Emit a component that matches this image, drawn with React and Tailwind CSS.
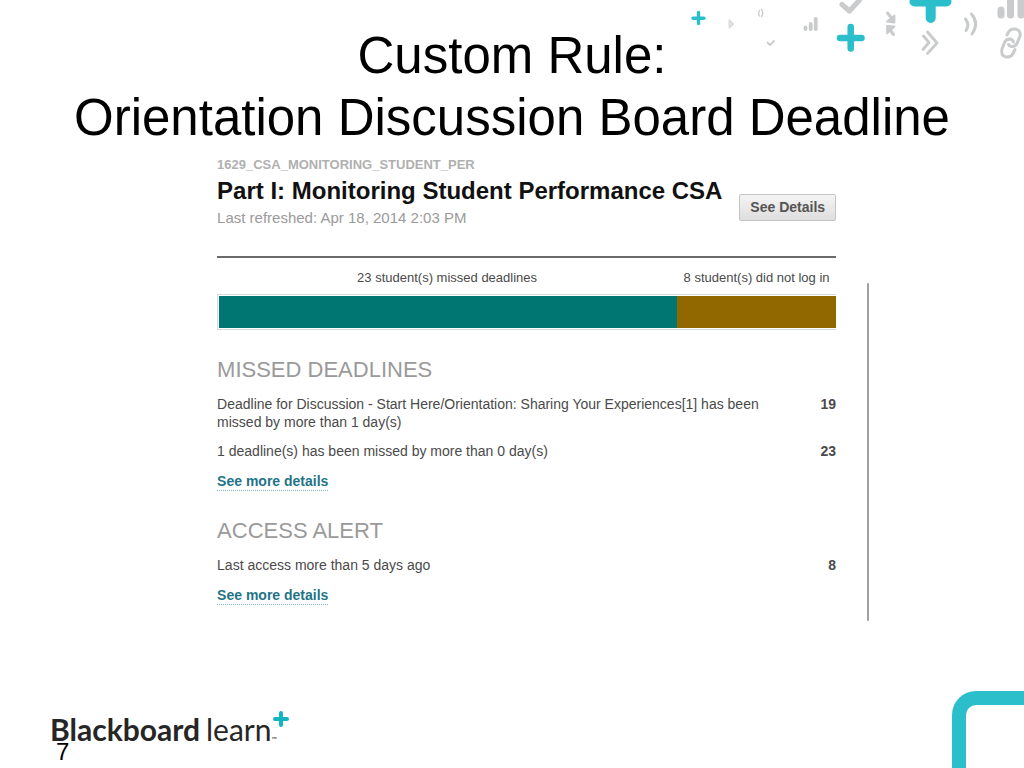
const sections = [
  {
    title: "MISSED DEADLINES",
    rows: [
      {
        text: "Deadline for Discussion - Start Here/Orientation: Sharing Your Experiences[1] has been missed by more than 1 day(s)",
        count: 19,
      },
      { text: "1 deadline(s) has been missed by more than 0 day(s)", count: 23 },
    ],
  },
  {
    title: "ACCESS ALERT",
    rows: [{ text: "Last access more than 5 days ago", count: 8 }],
  },
];

function Decoration() {
  return (
    <svg
      aria-hidden="true"
      className="pointer-events-none absolute top-0 right-0 h-16 w-[344px]"
      viewBox="680 0 344 64"
      fill="none"
      strokeLinecap="round"
      strokeLinejoin="round"
    >
      <g stroke="#2bbfcb">
        <path d="M698.500 12.500v11M693 18.300h11" strokeWidth="3.400" />
        <path d="M850.700 27v21.500M840 38h21.500" strokeWidth="6.500" />
        <path d="M930.700 -14v32M914.500 1.500h32" strokeWidth="10" />
      </g>
      <g stroke="#c9cbcc">
        <path d="M729.500 20.500v7M730 21l3 3-3 3" stroke="#dadcdc" strokeWidth="2" />
        <path d="M759.500 10.500q-1.500 3 0 5.500M761.500 9.500q2.500 3.500 0 7" strokeWidth="1.300" />
        <path d="M767.500 42.500l2.500 2.500 4-4" strokeWidth="1.800" />
        <path d="M805.500 27.500v1.500M810.700 24v5M815.700 19v10" strokeWidth="3.800" />
        <path d="M842 4.500l7.500 6.500 10-11" strokeWidth="5" />
        <path d="M887.500 13l4 5" strokeWidth="3" />
        <path d="M894.500 15.500v7l-7.500-1z" fill="#c9cbcc" strokeWidth="1.800" />
        <path d="M893.500 34.500l-3-4" strokeWidth="3" />
        <path d="M887 33.500v-7.500l7.500 .500z" fill="#c9cbcc" strokeWidth="1.800" />
        <path d="M923.500 36l5.500 6.500-6 7" strokeWidth="2.800" />
        <path d="M927.500 32l9.500 11-9.500 10.500" strokeWidth="2.800" />
        <path d="M965.500 19q4.500 5.500 .500 11.500M971.500 14q8 9.500 .500 20" strokeWidth="3" />
        <path d="M1001 10v5M1010.500 1.500v13.500M1021 -6v21" strokeWidth="7" />
        <g strokeWidth="3">
          <path d="M1007 35l1.500-3q2.500-3.500 6.500-3 6 1 5 7l-3 7.500q-2 3.500-5.500 3-2.500-.500-3-2" />
          <path d="M1013.500 42q-.500-2.500-3.500-3-4 0-5.500 3.500l-2.500 6.500q-1.500 7 4 8 5 .500 7-3.500l2-4" />
        </g>
      </g>
    </svg>
  );
}

function CornerFrame() {
  return (
    <div
      aria-hidden="true"
      className="h-[77px] w-[72px] rounded-tl-[24px] border-t-[14px] border-l-[14px] border-[#2bbfcb]"
    />
  );
}

function Logo() {
  return (
    <div className="flex items-start text-[30px] leading-8 text-[#262626] font-[Lato,sans-serif]">
      <span className="font-bold">Blackboard</span>
      <span className="ml-1.5">learn</span>
      <span className="relative w-5 self-stretch">
        <svg
          aria-hidden="true"
          className="absolute -top-0.5 left-0.5 size-4"
          viewBox="0 0 16 16"
          stroke="#12b5bf"
          strokeWidth="4"
          strokeLinecap="round"
        >
          <path d="M8 2v12M2 8h12" />
        </svg>
        <span className="absolute bottom-0.5 left-0 text-[7px] leading-none">™</span>
      </span>
    </div>
  );
}

function Section({ title, rows }) {
  return (
    <section className="mt-[26px]">
      <h3 className="text-[22px] leading-7 text-[#9a9a9a]">{title}</h3>
      <ul className="mt-[11px] flex flex-col gap-[11px]">
        {rows.map((row) => (
          <li key={row.text} className="flex justify-between gap-12 leading-[18px]">
            <span>{row.text}</span>
            <span className="font-bold">{row.count}</span>
          </li>
        ))}
      </ul>
      <a
        href="#details"
        className="mt-3 block w-fit border-b border-dotted border-[#7fb4c0] font-bold leading-[18px] text-[#1f7488]"
      >
        See more details
      </a>
    </section>
  );
}

export default function App() {
  return (
    <div className="relative flex min-h-screen flex-col overflow-hidden bg-white font-['Liberation_Sans',Arial,sans-serif] text-black">
      <Decoration />
      <h1 className="px-8 pt-[25px] text-center text-[51px] leading-[62px]">
        Custom Rule:
        <br />
        Orientation Discussion Board Deadline
      </h1>

      <main className="ml-[21.2%] flex max-w-[652px] items-end gap-[31px] pt-2">
        <article className="flex-1 pb-4 text-[14px] text-[#4a4a4a]">
          <header className="flex items-end justify-between border-b-2 border-[#6b6b6b] pb-7">
            <div>
              <p className="text-[13px] leading-4 font-bold text-[#b0b0b0]">
                1629_CSA_MONITORING_STUDENT_PER
              </p>
              <h2 className="pt-0.5 text-[24px] leading-8 font-bold text-[#111111]">
                Part I: Monitoring Student Performance CSA
              </h2>
              <p className="text-[15px] leading-[21px] text-[#9a9a9a]">
                Last refreshed: Apr 18, 2014 2:03 PM
              </p>
            </div>
            <button
              type="button"
              className="mb-[7px] h-[27px] shrink-0 rounded-xs border border-[#c4c4c4] bg-linear-to-b from-[#f4f4f4] to-[#dedede] px-2.5 font-bold text-[#555555]"
            >
              See Details
            </button>
          </header>

          <div className="grid grid-cols-[460fr_159fr] pt-3 pb-2 text-center text-[13px] leading-4">
            <span>23 student(s) missed deadlines</span>
            <span>8 student(s) did not log in</span>
          </div>
          <div className="grid h-9 grid-cols-[458fr_159fr] border-y border-l border-[#d4dcdc] py-px pl-px">
            <div className="bg-[#007672]" />
            <div className="bg-[#916800]" />
          </div>

          {sections.map((section) => (
            <Section key={section.title} {...section} />
          ))}
        </article>
        <div aria-hidden="true" className="h-[338px] w-0.5 rounded-full bg-[#a0a0a0]" />
      </main>

      <footer className="mt-auto flex items-end justify-between pl-[50px]">
        <div className="pb-[9px]">
          <Logo />
          <p className="pl-1.5 text-[24px] leading-[14px]">7</p>
        </div>
        <CornerFrame />
      </footer>
    </div>
  );
}
